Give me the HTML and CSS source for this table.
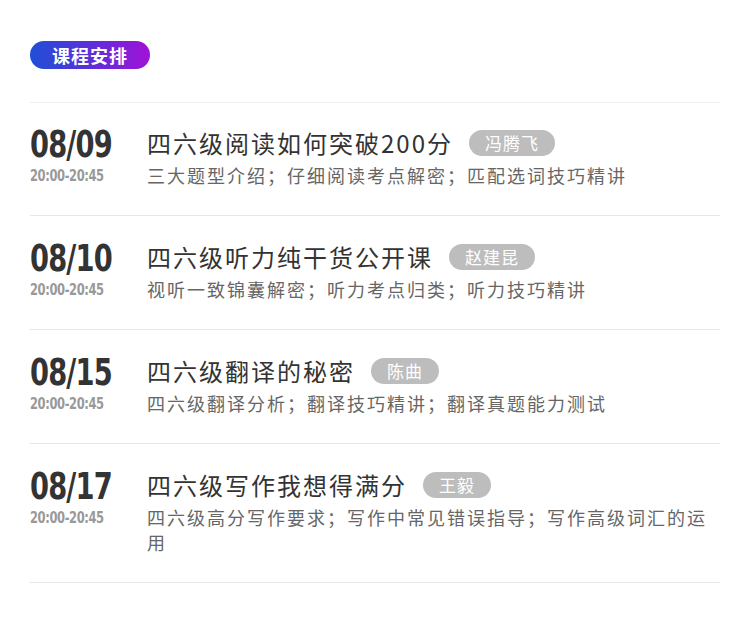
FILE: index.html
```html
<!DOCTYPE html>
<html lang="zh">
<head>
<meta charset="utf-8">
<link rel="stylesheet" href="styles.css">
</head>
<body>
<div class="page">
  <div class="head"><span class="tag-title">课程安排</span></div>
  <ul class="list">
    <li class="row">
      <div class="when"><div class="date">08/09</div><div class="time">20:00-20:45</div></div>
      <div class="info">
        <div class="title">四六级阅读如何突破200分<span class="teacher">冯腾飞</span></div>
        <div class="desc">三大题型介绍；仔细阅读考点解密；匹配选词技巧精讲</div>
      </div>
    </li>
    <li class="row">
      <div class="when"><div class="date">08/10</div><div class="time">20:00-20:45</div></div>
      <div class="info">
        <div class="title">四六级听力纯干货公开课<span class="teacher">赵建昆</span></div>
        <div class="desc">视听一致锦囊解密；听力考点归类；听力技巧精讲</div>
      </div>
    </li>
    <li class="row">
      <div class="when"><div class="date">08/15</div><div class="time">20:00-20:45</div></div>
      <div class="info">
        <div class="title">四六级翻译的秘密<span class="teacher">陈曲</span></div>
        <div class="desc">四六级翻译分析；翻译技巧精讲；翻译真题能力测试</div>
      </div>
    </li>
    <li class="row">
      <div class="when"><div class="date">08/17</div><div class="time">20:00-20:45</div></div>
      <div class="info">
        <div class="title">四六级写作我想得满分<span class="teacher">王毅</span></div>
        <div class="desc">四六级高分写作要求；写作中常见错误指导；写作高级词汇的运用</div>
      </div>
    </li>
  </ul>
</div>
</body>
</html>
```

FILE: styles.css
```css
* { box-sizing: border-box; }
html, body { margin: 0; padding: 0; background: #fff; }
body { font-family: "Noto Sans CJK SC", "Noto Sans", sans-serif; }
.page { padding: 41px 30px 0 30px; }
.head { height: 28px; margin-bottom: 33px; }
.tag-title {
  display: inline-flex; align-items: center; justify-content: center;
  width: 120px; height: 28px; border-radius: 14px;
  background: linear-gradient(90deg, #1f4fd6 0%, #5b30d8 50%, #a112d6 100%);
  color: #fff; font-size: 18px; font-weight: 700; letter-spacing: 1px;
}
.list { list-style: none; margin: 0; padding: 0; border-top: 1px solid #eeeeee; }
.row {
  display: flex; padding: 25px 0 27px 0; border-bottom: 1px solid #e6e6e6;
}
.row:first-child { padding-top: 24px; }
.when { width: 117px; flex-shrink: 0; }
.date {
  font-family: "DejaVu Sans Condensed", "DejaVu Sans", sans-serif; font-weight: 700;
  font-size: 37px; line-height: 36px; color: #333;
  transform: scaleX(0.82); transform-origin: left center; letter-spacing: -1px;
}
.time {
  font-family: "DejaVu Sans Condensed", "DejaVu Sans", sans-serif; font-weight: 700;
  font-size: 16px; line-height: 18px; color: #999; margin-top: 4px;
  transform: scaleX(0.8); transform-origin: left center; letter-spacing: -0.5px;
}
.info { flex: 1; min-width: 0; }
.title {
  display: flex; align-items: center;
  font-size: 24px; line-height: 32px; color: #333; letter-spacing: 2px;
}
.teacher {
  display: inline-flex; align-items: center; justify-content: center;
  height: 26px; padding: 0 16px; margin-left: 16px; border-radius: 13px;
  background: #bdbdbd; color: #fff; font-size: 17px; letter-spacing: 1px;
}
.desc {
  margin-top: 4px; font-size: 18px; line-height: 25px; color: #666; letter-spacing: 2px;
}
```
